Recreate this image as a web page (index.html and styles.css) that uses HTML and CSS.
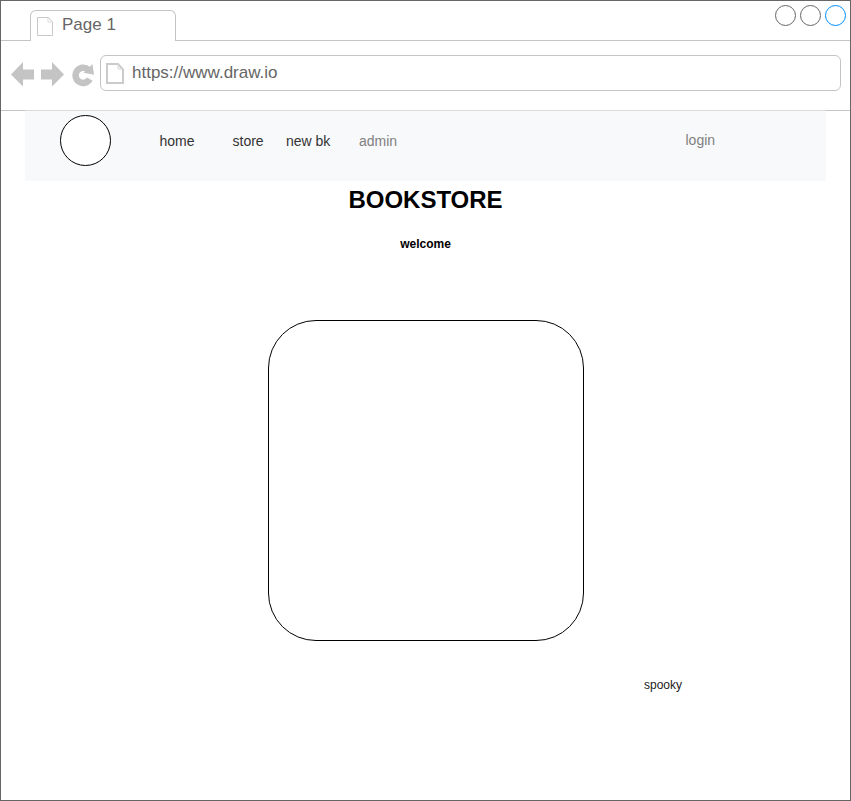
FILE: index.html
```html
<!DOCTYPE html>
<html lang="en">
<head>
<meta charset="utf-8">
<title>Bookstore</title>
<link rel="stylesheet" href="styles.css">
</head>
<body>
<div class="window">
  <div class="tabstrip">
    <div class="tab">
      <svg class="tab-icon" width="17" height="20" viewBox="0 0 17 20"><path d="M.5 .5H11.5L15.500 5V18.500H.5Z" fill="#fff" stroke="#c8c8c8"/><path d="M11 1V5H15" fill="none" stroke="#dcdcdc"/></svg>
      <span>Page 1</span>
    </div>
    <div class="controls">
      <span class="control"></span>
      <span class="control"></span>
      <span class="control control-active"></span>
    </div>
  </div>
  <div class="toolbar">
    <svg class="buttons" width="84" height="26" viewBox="0 0 84 26" fill="#c4c4c4">
      <path d="M0 13.500L12 1V8.500H23V18.500H12V25.500Z"/>
      <path d="M53 13.500L41 1V8.500H30V18.500H41V25.500Z"/>
      <path d="M78.800 18.200A7.600 7.600 0 1 1 77.500 8.900" fill="none" stroke="#c4c4c4" stroke-width="6.500"/>
      <path d="M81.500 3L83 13.800L72.500 11.800Z"/>
    </svg>
    <div class="address">
      <svg class="page-icon" width="18" height="21" viewBox="0 0 18 21"><path d="M1 1H12L17 6.500V20H1Z" fill="#fff" stroke="#cbcbcb" stroke-width="2"/><path d="M12 1V6H17" fill="none" stroke="#d8d8d8"/></svg>
      <span>https://www.draw.io</span>
    </div>
  </div>
  <nav class="nav">
    <span class="logo"></span>
    <a class="home">home</a>
    <a class="store">store</a>
    <a class="new">new bk</a>
    <a class="admin">admin</a>
    <a class="login">login</a>
  </nav>
  <main class="main">
    <h1>BOOKSTORE</h1>
    <p class="welcome">welcome</p>
    <div class="frame"></div>
    <p class="caption">spooky</p>
  </main>
</div>
</body>
</html>
```
FILE: styles.css
```css
* { box-sizing: border-box; }
body {
  margin: 0;
  background: #fff;
  font-family: "Liberation Sans", Arial, sans-serif;
}
.window {
  width: 851px;
  height: 801px;
  border: 1px solid #666;
  overflow: hidden;
}
.tabstrip {
  display: flex;
  justify-content: space-between;
  align-items: flex-start;
  height: 40px;
  border-bottom: 1px solid #c4c4c4;
}
.tab {
  display: flex;
  width: 146px;
  height: 31px;
  margin: 9px 0 0 29px;
  padding: 5px 0 0 6px;
  gap: 8px;
  border: 1px solid #c4c4c4;
  border-bottom: 0;
  border-radius: 6px 6px 0 0;
  background: #fff;
  color: #666;
  font-size: 17px;
  line-height: 17px;
}
.tab-icon { flex: none; margin-top: 1px; }
.controls {
  display: flex;
  gap: 4px;
  margin: 4px 4px 0 0;
}
.control {
  width: 21px;
  height: 21px;
  border: 1px solid #666;
  border-radius: 50%;
}
.control-active { border-color: #008cff; }
.toolbar {
  display: flex;
  align-items: flex-start;
  height: 70px;
  padding: 14px 9px 0 10px;
  border-bottom: 1px solid #c4c4c4;
}
.buttons { flex: none; margin: 6px 5px 0 0; }
.address {
  display: flex;
  flex: 1;
  height: 36px;
  padding: 8px 0 0 5px;
  gap: 8px;
  border: 1px solid #c4c4c4;
  border-radius: 6px;
  color: #666;
  font-size: 17px;
  line-height: 18px;
}
.page-icon { flex: none; margin-top: -1px; }
.nav {
  display: flex;
  align-items: flex-start;
  width: 801px;
  height: 71px;
  margin: -1px 0 0 24px;
  padding: 5px 0 0 35px;
  border-top: 1px solid #dadbdc;
  background: #f8f9fb;
  color: #333;
  font-size: 14px;
  line-height: 16px;
}
.nav a { margin-top: 17px; white-space: nowrap; }
.logo {
  width: 51px;
  height: 51px;
  margin-top: -1px;
  border: 1px solid #000;
  border-radius: 50%;
  background: #fff;
}
.nav .home { width: 73px; margin-left: 48.5px; }
.nav .store { width: 53.5px; }
.nav .new { width: 73px; }
.nav .admin { width: 326.5px; color: #808080; }
.nav .login { margin-top: 16px; color: #808080; }
.main {
  display: flex;
  flex-direction: column;
  align-items: center;
  padding-top: 5px;
  color: #000;
}
h1 {
  margin: 0;
  font-size: 24px;
  line-height: 28px;
}
.welcome {
  margin: 23px 0 0;
  font-size: 12px;
  font-weight: bold;
  line-height: 14px;
}
.frame {
  width: 316px;
  height: 321px;
  margin-top: 69px;
  border: 1px solid #000;
  border-radius: 48px;
}
.caption {
  align-self: flex-end;
  margin: 37px 168px 0 0;
  color: #222;
  font-size: 12px;
  line-height: 14px;
}
```
